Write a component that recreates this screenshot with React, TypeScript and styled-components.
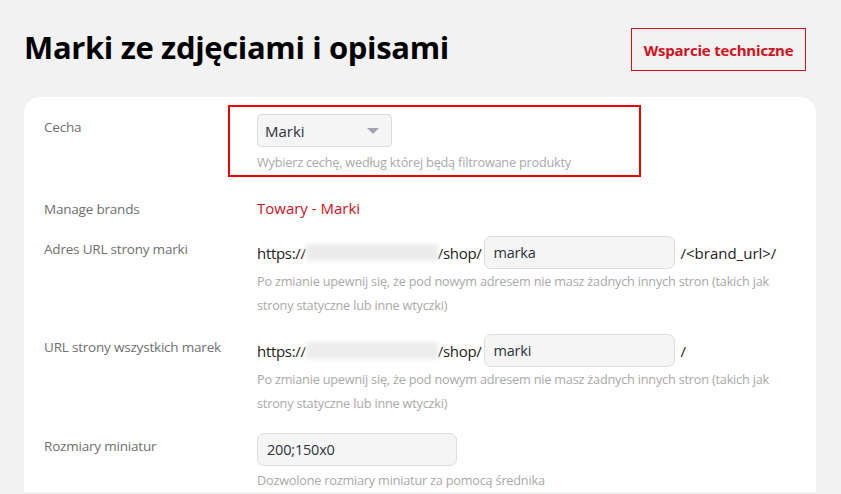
import React from "react";
import styled, { createGlobalStyle } from "styled-components";

const Global = createGlobalStyle`
  html, body { margin: 0; padding: 0; background: #f2f2f2; }
  body { font-family: "Open Sans", "Noto Sans", sans-serif; }
  *, *::before, *::after { box-sizing: border-box; }
`;

const Page = styled.div`
  padding: 0 25px 0 24px;
  height: 494px;
  overflow: hidden;
`;

const Header = styled.header`
  display: flex;
  align-items: center;
  justify-content: space-between;
  height: 97px;
  padding: 0 10px 0 0;
`;

const Title = styled.h1`
  margin: 0;
  font-size: 31px;
  font-weight: 700;
  color: #000;
  letter-spacing: -0.35px;
  padding-bottom: 4px;
`;

const SupportButton = styled.button`
  height: 43px;
  width: 175px;
  margin-top: 2px;
  border: 1.5px solid #d3101c;
  background: transparent;
  color: #d3101c;
  font-family: inherit;
  font-size: 15px;
  font-weight: 700;
  letter-spacing: -0.2px;
  padding: 0;
  cursor: pointer;
`;

const Card = styled.section`
  background: #fff;
  border-radius: 16px 16px 0 0;
  padding: 17px 20px 0 20px;
  display: flex;
  flex-direction: column;
`;

const Row = styled.div<{ $top?: number }>`
  display: grid;
  grid-template-columns: 213px 1fr;
  margin-top: ${(p) => p.$top ?? 0}px;
`;

const Label = styled.div`
  font-size: 13.5px;
  color: #6f6f6f;
  line-height: 20px;
  padding-top: 3px;
  letter-spacing: -0.2px;
`;

const Field = styled.div`
  display: flex;
  flex-direction: column;
`;

const Highlight = styled.div`
  position: relative;
  &::before {
    content: "";
    position: absolute;
    left: -29px;
    top: -9px;
    width: 413px;
    height: 72px;
    border: 2px solid #ee0000;
    pointer-events: none;
  }
`;

const Select = styled.div`
  width: 135px;
  height: 33px;
  background: #f5f5f5;
  border: 1.5px solid #dcdcdc;
  border-radius: 4px;
  display: flex;
  align-items: center;
  justify-content: space-between;
  padding: 0 12px 0 7px;
  font-size: 15px;
  color: #2c3340;
`;

const Caret = styled.span`
  width: 0;
  height: 0;
  border-left: 6px solid transparent;
  border-right: 6px solid transparent;
  border-top: 6px solid #a4a4b4;
`;

const Help = styled.div<{ $gap?: number }>`
  font-size: 12.7px;
  line-height: 24px;
  color: #a9a9a9;
  letter-spacing: -0.2px;
  max-width: 525px;
  margin-top: ${(p) => p.$gap ?? 0}px;
`;

const RedLink = styled.a`
  color: #d3101c;
  font-size: 15px;
  line-height: 24px;
  text-decoration: none;
`;

const UrlLine = styled.div`
  display: flex;
  align-items: center;
  font-size: 15px;
  color: #222;
  letter-spacing: -0.3px;
`;

const Blur = styled.span<{ $w: number }>`
  display: inline-block;
  width: ${(p) => p.$w}px;
  height: 17px;
  background: #ececec;
  filter: blur(2px);
`;

const TextInput = styled.div<{ $w: number; $gap?: number }>`
  width: ${(p) => p.$w}px;
  height: 33px;
  margin-left: ${(p) => p.$gap ?? 0}px;
  background: #f5f5f5;
  border: 1.5px solid #dddddd;
  border-radius: 7px;
  display: flex;
  align-items: center;
  padding: 0 9px;
  font-size: 14.5px;
  color: #2c3340;
  letter-spacing: -0.2px;
`;

const Suffix = styled.span`
  margin-left: 6px;
  letter-spacing: 0;
`;

export default function App() {
  return (
    <>
      <Global />
      <Page>
        <Header>
          <Title>Marki ze zdjęciami i opisami</Title>
          <SupportButton>Wsparcie techniczne</SupportButton>
        </Header>
        <Card>
          <Row>
            <Label>Cecha</Label>
            <Field>
              <Highlight>
                <Select>
                  Marki
                  <Caret />
                </Select>
                <Help $gap={3}>Wybierz cechę, według której będą filtrowane produkty</Help>
              </Highlight>
            </Field>
          </Row>
          <Row $top={22}>
            <Label>Manage brands</Label>
            <Field>
              <RedLink href="#">Towary - Marki</RedLink>
            </Field>
          </Row>
          <Row $top={16}>
            <Label>Adres URL strony marki</Label>
            <Field>
              <UrlLine>
                https://
                <Blur $w={132} />
                /shop/
                <TextInput $w={191} $gap={2}>marka</TextInput>
                <Suffix>/&lt;brand_url&gt;/</Suffix>
              </UrlLine>
              <Help>
                Po zmianie upewnij się, że pod nowym adresem nie masz żadnych innych stron (takich jak
                strony statyczne lub inne wtyczki)
              </Help>
            </Field>
          </Row>
          <Row $top={17}>
            <Label>URL strony wszystkich marek</Label>
            <Field>
              <UrlLine>
                https://
                <Blur $w={132} />
                /shop/
                <TextInput $w={191} $gap={2}>marki</TextInput>
                <Suffix>/</Suffix>
              </UrlLine>
              <Help>
                Po zmianie upewnij się, że pod nowym adresem nie masz żadnych innych stron (takich jak
                strony statyczne lub inne wtyczki)
              </Help>
            </Field>
          </Row>
          <Row $top={18}>
            <Label>Rozmiary miniatur</Label>
            <Field>
              <TextInput $w={200}>200;150x0</TextInput>
              <Help $gap={2}>Dozwolone rozmiary miniatur za pomocą średnika</Help>
            </Field>
          </Row>
        </Card>
      </Page>
    </>
  );
}
